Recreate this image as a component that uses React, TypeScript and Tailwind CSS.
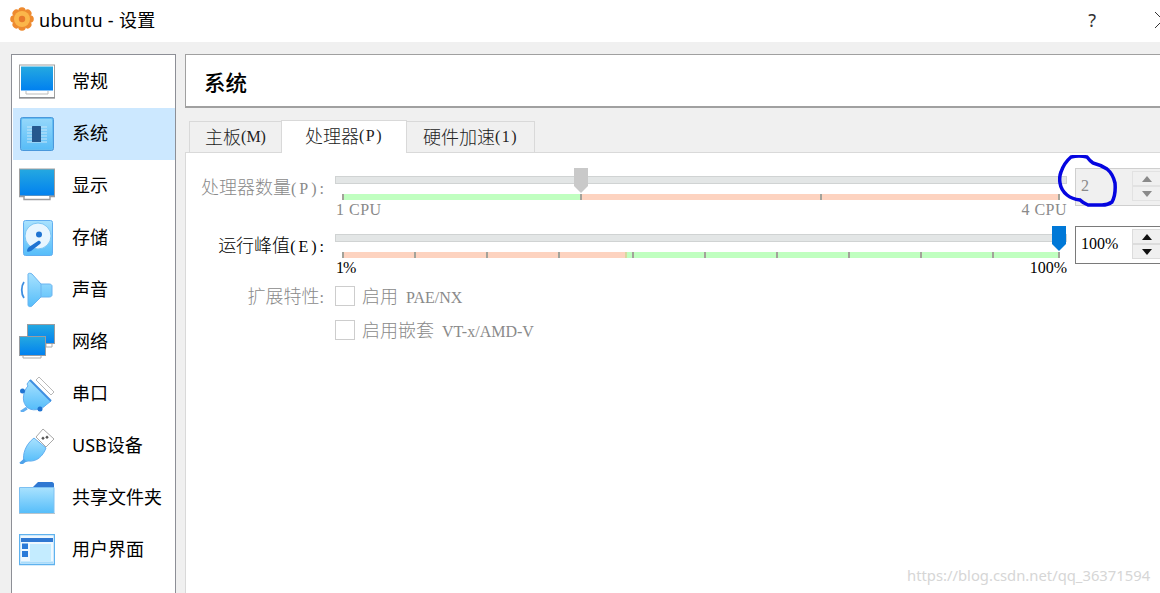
import React from "react";

const cjk = { fontFamily: '"Noto Sans", "Noto Sans CJK SC", sans-serif' };
const serif = { fontFamily: '"Liberation Serif", "Noto Sans CJK SC", serif' };

function Defs() {
  return (
    <svg width="0" height="0" className="absolute">
      <defs>
        <linearGradient id="scr" x1="0" y1="0" x2="0" y2="1">
          <stop offset="0" stopColor="#25a9e0" />
          <stop offset="1" stopColor="#0080f0" />
        </linearGradient>
        <linearGradient id="lb" x1="0" y1="0" x2="0" y2="1">
          <stop offset="0" stopColor="#a9e2fe" />
          <stop offset="1" stopColor="#55bdfa" />
        </linearGradient>
      </defs>
    </svg>
  );
}

const IconGeneral = () => (
  <svg width="36" height="36" viewBox="0 0 36 36">
    <rect x="0.5" y="1" width="35" height="33" fill="#fff" stroke="#a0a0a0" />
    <rect x="2" y="2.5" width="32" height="24" fill="url(#scr)" />
    <path d="M7 27v3h22v-3" fill="#fff" stroke="#bbb" />
    <rect x="0" y="33" width="36" height="1.4" fill="#8e9094" />
  </svg>
);
const IconSystem = () => (
  <svg width="36" height="36" viewBox="0 0 36 36">
    <rect x="1.5" y="1.5" width="33" height="33" rx="2" fill="#62bdf2" stroke="#4a98dc" />
    <rect x="3" y="3" width="30" height="30" rx="1" fill="url(#lb)" opacity="0.7" />
    <path d="M8 11h20M8 14h20M8 17h20M8 20h20M8 23h20M8 26h20" stroke="#c6e6f8" strokeWidth="1" />
    <rect x="13" y="10" width="9" height="16" rx="0.5" fill="#26588e" />
  </svg>
);
const IconDisplay = () => (
  <svg width="36" height="36" viewBox="0 0 36 36">
    <rect x="0.5" y="1" width="35" height="27" fill="url(#scr)" stroke="#a0a0a0" />
    <path d="M6 28v1.500h24V28" fill="#fff" />
    <path d="M0 28.500h5v3h26v-3h5" fill="none" stroke="#9a9ca0" strokeWidth="1.400" />
  </svg>
);
const IconStorage = () => (
  <svg width="36" height="36" viewBox="0 0 36 36">
    <rect x="4.500" y="0.500" width="29" height="35" rx="2" fill="url(#lb)" stroke="#62aef0" />
    <circle cx="19" cy="16" r="13" fill="#e8f6ff" stroke="#7cc6f4" />
    <circle cx="20" cy="14.500" r="3" fill="#1f74d2" />
    <path d="M8 31c0-2 1-3 2-4l9-6c2-1 4 2 2 3l-9 7c-2 1-4 1-4 0z" fill="#1f74d2" />
  </svg>
);
const IconSound = () => (
  <svg width="36" height="36" viewBox="0 0 36 36">
    <path d="M5 10c-3 4-3 12 0 16" fill="none" stroke="#3e8ee0" strokeWidth="1.800" />
    <path d="M9 2c0-1 3-1 4 0l9 10h8c2 0 3 1 3 2v9c0 1-1 2-3 2h-8l-9 9c-1 1-4 1-4-1z" fill="url(#lb)" stroke="#6ab4f0" />
    <path d="M22 12v13" stroke="#6ab4f0" />
  </svg>
);
const IconNetwork = () => (
  <svg width="36" height="36" viewBox="0 0 36 36">
    <rect x="8.500" y="0.500" width="27" height="19" fill="url(#scr)" stroke="#9a9ca0" />
    <path d="M27 20v3h6v-3" fill="#fff" stroke="#aaa" />
    <rect x="0.500" y="12.500" width="26" height="19" fill="url(#scr)" stroke="#9a9ca0" />
    <path d="M4 32v2h18v-2" fill="#fff" stroke="#aaa" />
  </svg>
);
const IconSerial = () => (
  <svg width="36" height="36" viewBox="0 0 36 36">
    <path d="M20 1 L35 16 L32 19 L17 4 Z" fill="#fff" stroke="#b8b8b8" />
    <path d="M11 4 L32 25 L27 29 C24 33 12 37 7 30 C2 24 5 14 9 10 L8 8 Z" fill="url(#lb)" stroke="#62aef0" />
    <path d="M11 4 L32 25" stroke="#3f8fe0" strokeWidth="2" />
    <circle cx="3.500" cy="15" r="2.500" fill="#1f74d2" />
    <circle cx="21" cy="33" r="2.500" fill="#1f74d2" />
    <path d="M8 32 L2 36" stroke="#62aef0" strokeWidth="3" />
  </svg>
);
const IconUsb = () => (
  <svg width="36" height="36" viewBox="0 0 36 36">
    <path d="M24 1 L35 11 L27 19 L17 9 Z" fill="#fff" stroke="#a8a8a8" />
    <rect x="23" y="9" width="2.500" height="2.500" fill="#555" transform="rotate(45 24 10)" />
    <rect x="27" y="8" width="2.500" height="2.500" fill="#555" transform="rotate(45 28 9)" />
    <path d="M15 10 L27 20 C24 28 18 34 9 33 L5 34 C3 26 7 16 15 10 Z" fill="url(#lb)" stroke="#62aef0" />
    <path d="M6 32 L1.500 36" stroke="#4fa2ea" strokeWidth="3.500" />
  </svg>
);
const IconFolder = () => (
  <svg width="36" height="32" viewBox="0 0 36 32">
    <path d="M14 5l5-5h14c1 0 2 1 2 2v4z" fill="#2f78d2" />
    <path d="M0.500 5.500h34.500v26H0.500z" fill="url(#lb)" stroke="#7cc0f2" />
    <path d="M0 31.500h36" stroke="#b8c4cc" />
  </svg>
);
const IconUi = () => (
  <svg width="36" height="32" viewBox="0 0 36 32">
    <rect x="0.500" y="0.500" width="35" height="30" fill="#eef8ff" stroke="#5fb2ee" strokeWidth="1.500" />
    <rect x="2" y="4" width="32" height="4" fill="#2f78d2" />
    <rect x="3" y="9.500" width="6" height="5.500" fill="#2a7ad8" />
    <rect x="3" y="17" width="6" height="6" fill="#2a7ad8" />
    <rect x="11" y="10" width="21" height="17" fill="#c4ecff" />
    <rect x="2" y="27.500" width="32" height="2" fill="#a8dcfb" />
  </svg>
);

const items: [string, React.ReactNode][] = [
  ["常规", <IconGeneral />],
  ["系统", <IconSystem />],
  ["显示", <IconDisplay />],
  ["存储", <IconStorage />],
  ["声音", <IconSound />],
  ["网络", <IconNetwork />],
  ["串口", <IconSerial />],
  ["USB设备", <IconUsb />],
  ["共享文件夹", <IconFolder />],
  ["用户界面", <IconUi />],
];

function Spin({ value, disabled }: { value: string; disabled?: boolean }) {
  const arrow = disabled ? "#8a8a8a" : "#111";
  return (
    <div
      className={
        "w-[100px] h-[38px] shrink-0 flex items-stretch border pl-[5px] pt-[2px] pb-[4px] " +
        (disabled ? "border-[#cfcfcf] bg-[#f0f0f0] text-[#8a8a8a]" : "border-[#7a7a7a] bg-white text-black")
      }
    >
      <span className="w-[51px] flex items-center text-[16px]" style={serif}>
        {value}
      </span>
      <div className="flex flex-col w-[40px]">
        {[0, 1].map((i) => (
          <div
            key={i}
            className={
              "flex-1 flex items-center pl-[9px] border " +
              (disabled ? "border-[#e2e2e2]" : "border-[#dcdcdc] bg-[#f0f0f0]")
            }
          >
            <svg width="10" height="6" viewBox="0 0 10 6">
              <path d={i === 0 ? "M5 0L10 6H0z" : "M0 0H10L5 6z"} fill={arrow} />
            </svg>
          </div>
        ))}
      </div>
    </div>
  );
}

function Thumb({ x, color }: { x: number; color: string }) {
  return (
    <svg width="14" height="25" viewBox="0 0 14 25" className="absolute top-[-9px]" style={{ left: x }}>
      <path d="M0 0H14V18L7 25L0 18Z" fill={color} />
    </svg>
  );
}

function Label({ cn, latin, disabled }: { cn: string; latin: string; disabled?: boolean }) {
  return (
    <div
      className={
        "w-[141px] text-right leading-[22px] shrink-0 mr-[8px] whitespace-nowrap font-light " +
        (disabled ? "text-[#8a8a8a]" : "text-black")
      }
    >
      <span className="text-[18px]" style={cjk}>
        {cn}
      </span>
      <span className="text-[16px] tracking-[3px]" style={serif}>
        {latin}
      </span>
    </div>
  );
}

function SliderRow({
  cn,
  latin,
  disabled,
  left,
  right,
  scaleClass,
  leftClass,
  thumb,
  thumbColor,
  segments,
  ticks,
  spin,
}: {
  cn: string;
  latin: string;
  disabled?: boolean;
  left: string;
  right: string;
  scaleClass: string;
  leftClass: string;
  thumb: number;
  thumbColor: string;
  segments: [number, string][];
  ticks: number[];
  spin: string;
}) {
  return (
    <div className="flex items-start">
      <Label cn={cn} latin={latin} disabled={disabled} />
      <div className="w-[732px] shrink-0 mr-[8px]">
        <div className="relative h-[8px] bg-[#e3e6e6] border border-[#d0d3d3]">
          <Thumb x={thumb} color={thumbColor} />
        </div>
        <div className="relative h-[6px] mt-[10px] mx-[8px] flex">
          {segments.map(([w, c], i) => (
            <div key={i} className="h-full" style={{ width: w, backgroundColor: c }} />
          ))}
          {ticks.map((t) => (
            <div key={t} className="absolute top-0 h-[6px] w-[2px] bg-[#a3a39a]" style={{ left: t }} />
          ))}
        </div>
        <div
          className={
            "flex justify-between text-[16px] leading-[17px] mt-[1px] " +
            scaleClass +
            (disabled ? " text-[#8a8a8a]" : " text-black")
          }
          style={serif}
        >
          <span className={"pl-px " + leftClass}>{left}</span>
          <span>{right}</span>
        </div>
      </div>
      <div className="mt-[-8px]">
        <Spin value={spin} disabled={disabled} />
      </div>
    </div>
  );
}

function Check({ cn, latin }: { cn: string; latin: string }) {
  return (
    <div className="flex items-center gap-[7px] h-[20px] text-[#8a8a8a] font-light">
      <div className="w-[20px] h-[20px] border border-[#cdcdcd] bg-white" />
      <span className="whitespace-pre">
        <span className="text-[18px]" style={cjk}>
          {cn}
        </span>
        <span className="text-[16px] pl-[4px]" style={serif}>
          {latin}
        </span>
      </span>
    </div>
  );
}

function Tab({ cn, latin, className, track }: { cn: string; latin: string; className: string; track: string }) {
  return (
    <div className={"flex items-center justify-center text-[#222] border border-[#d9d9d9] font-light " + className}>
      <span className="text-[18px]" style={cjk}>
        {cn}
      </span>
      <span className={"text-[16px] " + track} style={serif}>
        {latin}
      </span>
    </div>
  );
}

export default function App() {
  return (
    <div className="relative w-[1160px] h-[593px] overflow-hidden bg-[#f0f0f0] flex flex-col" style={cjk}>
      <Defs />
      <div className="h-[42px] shrink-0 bg-white flex items-center pl-[10px]">
        <svg width="24" height="24" viewBox="0 0 24 24" className="mb-[4px]">
          <g fill="#ee8a2e">
            {[0, 45, 90, 135, 180, 225, 270, 315].map((a) => (
              <circle key={a} cx="12" cy="4" r="3.800" transform={`rotate(${a} 12 12)`} />
            ))}
          </g>
          <circle cx="12" cy="12" r="8" fill="#fbb64a" />
          <circle cx="12" cy="12" r="3.200" fill="#e8782a" />
        </svg>
        <span className="ml-[5px] text-[18px] tracking-[0.3px] text-black mb-[2px]">ubuntu - 设置</span>
        <span className="ml-auto mr-[59px] text-[18px] text-[#333] mb-[2px]">?</span>
        <svg width="5" height="16" viewBox="0 0 5 16" className="mb-[2px]">
          <path d="M0 0L8 8L0 16" fill="none" stroke="#333" strokeWidth="1" />
        </svg>
      </div>

      <div className="flex-1 flex pt-[12px] pl-[11px] gap-[9px] min-h-0">
        <div className="w-[165px] h-[600px] shrink-0 bg-white border border-[#8d8f96] pt-px pl-px">
          {items.map(([name, icon], i) => (
            <div
              key={name}
              className={"h-[52px] flex items-center text-[18px] text-black " + (i === 1 ? "bg-[#cce8ff]" : "")}
            >
              <div className="w-[36px] ml-[6px] mr-[17px] flex justify-center">{icon}</div>
              <span className="pb-[2px]">{name}</span>
            </div>
          ))}
        </div>

        <div className="flex-1 min-w-0 flex flex-col">
          <div className="h-[54px] shrink-0 bg-white border-t border-l border-[#a0a0a0] border-b-2 border-b-[#a0a0a0] flex items-center pl-[18px] pt-[5px] text-[21.500px] font-medium text-black">
            系统
          </div>
          <div className="flex pl-[4px] mt-[12px] items-end h-[33px] relative z-10">
            <Tab cn="主板" latin="(M)" track="" className="w-[92px] border-r-0 bg-[#f0f0f0] h-[32px]" />
            <Tab cn="处理器" latin="(P)" track="tracking-[1.500px]" className="w-[126px] bg-white h-[33px] border-b-0 pb-[2px]" />
            <Tab cn="硬件加速" latin="(1)" track="tracking-[1.500px]" className="w-[128px] border-l-0 bg-[#f0f0f0] h-[32px]" />
          </div>
          <div className="flex-1 bg-white border-t border-l border-[#d9d9d9] mt-[-1px] pt-[23px]">
            <div className="flex flex-col">
              <SliderRow
                cn="处理器数量"
                latin="(P):"
                disabled
                left="1 CPU"
                right="4 CPU"
                scaleClass="tracking-[0.5px]"
                leftClass=""
                thumb={238}
                thumbColor="#c9c9c9"
                segments={[[238, "#c0ffc0"], [478, "#fdd3c0"]]}
                ticks={[-1, 237, 477, 715]}
                spin="2"
              />
              <div className="h-[16px]" />
              <SliderRow
                cn="运行峰值"
                latin="(E):"
                left="1%"
                right="100%"
                scaleClass=""
                leftClass="tracking-[-1px]"
                thumb={716}
                thumbColor="#0078d7"
                segments={[[282, "#fdd3c0"], [2, "#d8d8a0"], [432, "#c0ffc0"]]}
                ticks={[-1, 71, 143, 215, 289, 361, 433, 505, 577, 649, 715]}
                spin="100%"
              />
              <div className="flex mt-[10px]">
                <div className="w-[141px] mr-[8px] text-right leading-[20px] text-[#8a8a8a] font-light">
                  <span className="text-[18px]" style={cjk}>
                    扩展特性
                  </span>
                  <span className="text-[16px] tracking-[3px]" style={serif}>
                    :
                  </span>
                </div>
                <div className="flex flex-col gap-[14px]">
                  <Check cn="启用" latin=" PAE/NX" />
                  <Check cn="启用嵌套" latin=" VT-x/AMD-V" />
                </div>
              </div>
            </div>
          </div>
        </div>
      </div>

      <svg width="60" height="52" viewBox="0 0 60 52" className="absolute left-[1058px] top-[155px]">
        <path
          d="M13 2Q21 0 29 2Q32 6 35 8Q43 10 49 14Q55 19 57 28Q58 40 54 47Q50 50 44 50L30 50Q25 48 22 45Q14 44 9 40Q3 35 2 28Q1 22 3 17Q6 8 13 2Z"
          fill="none"
          stroke="#0505e0"
          strokeWidth="3.500"
        />
      </svg>
      <div
        className="absolute left-[907px] top-[565px] text-[14.800px] leading-[20px] text-[#d6d6d6] whitespace-nowrap"
        style={{ fontFamily: '"Noto Sans", sans-serif' }}
      >
        https://blog.csdn.net/qq_36371594
      </div>
    </div>
  );
}
